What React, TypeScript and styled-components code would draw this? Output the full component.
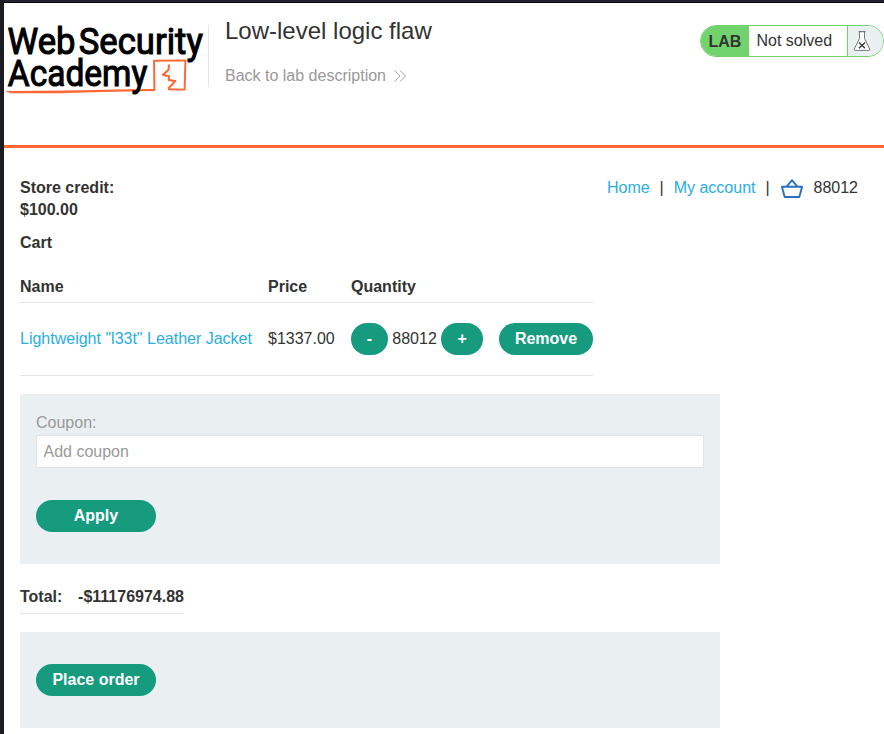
import React from "react";
import styled, { createGlobalStyle } from "styled-components";

const GlobalStyle = createGlobalStyle`
  * { box-sizing: border-box; }
  body { margin: 0; background: #fff; }
`;

const Frame = styled.div`
  height: 734px;
  overflow: hidden;
  border-left: 4px solid #1c1b20;
  background: #fff;
  color: #333332;
  font: 16px/22px "Liberation Sans", Arial, sans-serif;
`;

const TopEdge = styled.div`
  height: 3px;
  background: #22232d;
  border-bottom: 1px solid #05060a;
`;

const Header = styled.header`
  display: flex;
  align-items: flex-start;
  height: 145px;
  padding-top: 22px;
  border-bottom: 3px solid #ff6633;
`;

const Logo = styled.svg`
  display: block;
  width: 204px;
  height: 74px;
  flex: none;
  overflow: visible;
`;

const TitleBlock = styled.div`
  flex: 1;
  height: 62px;
  border-left: 1px solid #e4e4e4;
  padding-left: 16px;
`;

const Title = styled.h2`
  margin: -9px 0 0;
  font-size: 24px;
  line-height: 30px;
  font-weight: 400;
`;

const BackLink = styled.a`
  display: flex;
  align-items: center;
  gap: 8.5px;
  margin-top: 20px;
  color: #999;
  line-height: 20px;
`;

const LabStatus = styled.div`
  display: flex;
  width: 184px;
  height: 32px;
  border: 1px solid #72d36e;
  border-radius: 16px;
  overflow: hidden;
  line-height: 30px;
  background: #fff;
`;

const LabTag = styled.span`
  width: 48px;
  padding: 1px 0 0 7.5px;
  background: #72d36e;
  font-weight: 700;
`;

const LabText = styled.span`
  flex: 1;
  padding-left: 7.5px;
  white-space: nowrap;
`;

const LabIcon = styled.span`
  width: 36px;
  border-left: 1px solid #72d36e;
  background: #eaeff2;
`;

const Content = styled.main`
  padding: 29px 26px 0 16px;
`;

const TopRow = styled.div`
  display: flex;
  justify-content: space-between;
  height: 55px;
`;

const Nav = styled.nav`
  display: flex;
  height: 22px;
`;

const Link = styled.a`
  color: #29ade5;
`;

const Separator = styled.span`
  width: 24px;
  text-align: center;
`;

const Strong = styled.div`
  font-weight: 700;
`;

const CartTable = styled.div`
  width: 573px;
  margin-top: 22px;
`;

const CartRow = styled.div<{ $head?: boolean }>`
  display: grid;
  grid-template-columns: 248px 83px 148px 94px;
  align-items: ${(p) => (p.$head ? "start" : "center")};
  height: ${(p) => (p.$head ? 27 : 73)}px;
  font-weight: ${(p) => (p.$head ? 700 : 400)};
  border-bottom: 1px solid #e4e4e4;
`;

const Quantity = styled.div`
  display: flex;
  align-items: center;
  gap: 4.3px;
`;

const Button = styled.button<{ $width: number }>`
  width: ${(p) => p.$width}px;
  height: 32px;
  padding: 0 0 1px;
  border: 0;
  border-radius: 16px;
  background: #169b7f;
  color: #fff;
  font: 700 16px/30px "Liberation Sans", Arial, sans-serif;
`;

const Panel = styled.section<{ $height: number; $top: number }>`
  width: 700px;
  height: ${(p) => p.$height}px;
  margin-top: 18px;
  padding: ${(p) => p.$top}px 16px 0;
  background: #eaeff2;
`;

const Label = styled.label`
  display: block;
  height: 23px;
  color: #999;
`;

const Input = styled.input`
  display: block;
  width: 668px;
  height: 33px;
  margin-bottom: 32px;
  padding: 0 6.5px;
  border: 1px solid #e2e3e4;
  border-radius: 0;
  outline: 0;
  background: #fff;
  font: 16px "Liberation Sans", Arial, sans-serif;
  &::placeholder { color: #999; opacity: 1; }
`;

const Total = styled(Strong)`
  display: flex;
  justify-content: space-between;
  width: 164px;
  height: 28px;
  margin-top: 22px;
  border-bottom: 1px solid #e4e4e4;
`;

function AcademyLogo() {
  return (
    <Logo viewBox="4 25 204 74" aria-label="Web Security Academy">
      <g fill="none" stroke="#ff6633" strokeLinejoin="round">
        <path d="M154.4 90.2 L154 60.8 L185.4 60.4 L184.6 89.6 L168 89.2" strokeWidth="1.9" />
        <path d="M169 64.5 L168.4 70 L162.8 74.8 L169 76.3 L168.7 80 L175.3 81 L168.2 88.6" strokeWidth="2" />
      </g>
      <path d="M4 90.8 L12 91 L70 90.6 L130 89.2 L155.3 89 L155.3 91 L100 92 L60 93.2 L10 93.2 L8 92 Z" fill="#ff6633" />
      <g fill="#000" stroke="#000" strokeWidth="1.1" fontFamily="Roboto, sans-serif" fontWeight="400" fontSize="37.6">
        <text x="7.5" y="53.6" textLength="68" lengthAdjust="spacingAndGlyphs">Web</text>
        <text x="78.8" y="53.6" textLength="124" lengthAdjust="spacingAndGlyphs">Security</text>
        <text x="7.8" y="86" textLength="139.5" lengthAdjust="spacingAndGlyphs">Academy</text>
      </g>
    </Logo>
  );
}

const Chevrons = () => (
  <svg width="12" height="12" viewBox="0 0 12 12" fill="none" stroke="#999" strokeWidth="0.9">
    <path d="M.5 .3 L6 6 L.5 11.7 M6 .3 L11.5 6 L6 11.7" />
  </svg>
);

const Flask = () => (
  <svg width="35" height="30" viewBox="848 26 35 30" fill="none">
    <path d="M859.5 32 V38.5 L854.3 49 Q853.8 50.4 855.2 50.4 H868.8 Q870.2 50.4 869.7 49 L864.5 38.5 V32" fill="#fff" stroke="#777" strokeWidth="1" />
    <path d="M858.5 31.7 H865.5" stroke="#777" strokeWidth="1.2" />
    <path d="M859 42.5 L865 48.3 M865 42.5 L859 48.3" stroke="#333" strokeWidth="1.3" />
  </svg>
);

const BasketSvg = styled.svg`
  margin: 2px 11px 0 1px;
`;

const Basket = () => (
  <BasketSvg width="22" height="19" viewBox="781 179 22 19" fill="none" stroke="#2a71b8" strokeWidth="1.9" strokeLinejoin="round">
    <path d="M781.9 186.8 H802.1 L799.3 197 H784.7 Z M786.8 186.5 L792 180.2 L797.2 186.5" />
  </BasketSvg>
);

export default function App() {
  return (
    <Frame>
      <GlobalStyle />
      <TopEdge />
      <Header>
        <AcademyLogo />
        <TitleBlock>
          <Title>Low-level logic flaw</Title>
          <BackLink>
            Back to lab description <Chevrons />
          </BackLink>
        </TitleBlock>
        <LabStatus>
          <LabTag>LAB</LabTag>
          <LabText>Not solved</LabText>
          <LabIcon><Flask /></LabIcon>
        </LabStatus>
      </Header>
      <Content>
        <TopRow>
          <Strong>
            Store credit:
            <br />
            $100.00
          </Strong>
          <Nav>
            <Link>Home</Link>
            <Separator>|</Separator>
            <Link>My account</Link>
            <Separator>|</Separator>
            <Basket />
            <span>88012</span>
          </Nav>
        </TopRow>
        <Strong>Cart</Strong>
        <CartTable>
          <CartRow $head>
            <span>Name</span>
            <span>Price</span>
            <span>Quantity</span>
          </CartRow>
          <CartRow>
            <Link>Lightweight "l33t" Leather Jacket</Link>
            <span>$1337.00</span>
            <Quantity>
              <Button $width={37}>-</Button>
              <span>88012</span>
              <Button $width={42}>+</Button>
            </Quantity>
            <Button $width={94}>Remove</Button>
          </CartRow>
        </CartTable>
        <Panel $height={170} $top={18}>
          <Label htmlFor="coupon">Coupon:</Label>
          <Input id="coupon" placeholder="Add coupon" />
          <Button $width={120}>Apply</Button>
        </Panel>
        <Total>
          <span>Total:</span>
          <span>-$11176974.88</span>
        </Total>
        <Panel $height={96} $top={32}>
          <Button $width={120}>Place order</Button>
        </Panel>
      </Content>
    </Frame>
  );
}
